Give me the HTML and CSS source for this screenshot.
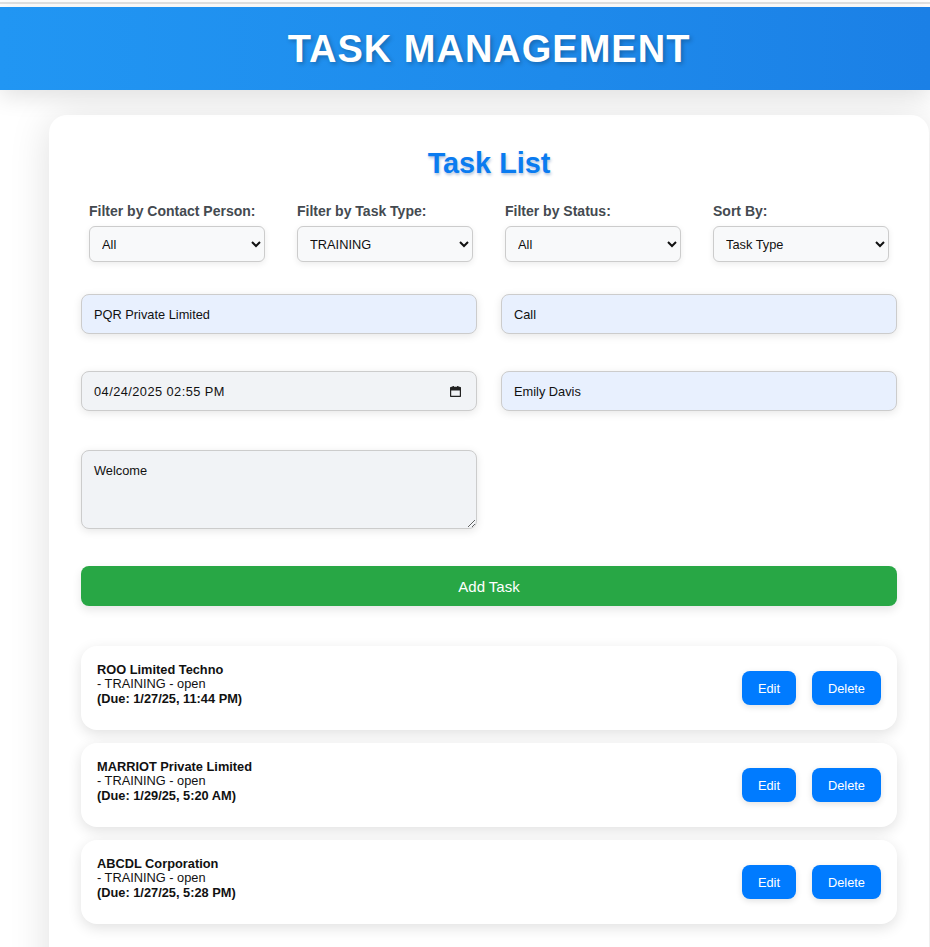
FILE: index.html
```html
<!DOCTYPE html>
<html lang="en">
<head>
<meta charset="utf-8">
<title>Task Management</title>
<link rel="stylesheet" href="styles.css">
</head>
<body>
<div class="topstrip"></div>
<header class="app-header">
  <h1 class="app-title">TASK MANAGEMENT</h1>
</header>
<main class="page">
  <section class="card">
    <h2 class="card-title">Task List</h2>
    <div class="filters">
      <div class="filter">
        <label class="filter-label">Filter by Contact Person:</label>
        <select class="filter-select"><option>All</option></select>
      </div>
      <div class="filter">
        <label class="filter-label">Filter by Task Type:</label>
        <select class="filter-select"><option>TRAINING</option></select>
      </div>
      <div class="filter">
        <label class="filter-label">Filter by Status:</label>
        <select class="filter-select"><option>All</option></select>
      </div>
      <div class="filter">
        <label class="filter-label">Sort By:</label>
        <select class="filter-select"><option>Task Type</option></select>
      </div>
    </div>
    <form class="task-form">
      <input class="field field-blue" type="text" value="PQR Private Limited">
      <input class="field field-blue" type="text" value="Call">
      <div class="date-wrap">
        <input class="field field-grey field-date" type="text" value="04/24/2025 02:55 PM">
        <svg class="cal-icon" width="11" height="11" viewBox="0 0 11 11" aria-hidden="true">
          <rect x="0.5" y="1.5" width="10" height="9" rx="1" fill="none" stroke="#222" stroke-width="1.4"/>
          <rect x="0.5" y="1.5" width="10" height="3" fill="#222"/>
          <rect x="2.5" y="0" width="1.4" height="2.5" fill="#222"/>
          <rect x="7.1" y="0" width="1.4" height="2.5" fill="#222"/>
        </svg>
      </div>
      <input class="field field-blue" type="text" value="Emily Davis">
      <textarea class="field field-grey field-area">Welcome</textarea>
    </form>
    <button class="add-btn" type="button">Add Task</button>
    <ul class="task-list">
      <li class="task-item">
        <div class="task-text">
          <strong>ROO Limited Techno</strong><br>
          - TRAINING - open<br>
          <strong>(Due: 1/27/25, 11:44 PM)</strong>
        </div>
        <div class="task-actions">
          <button class="act-btn" type="button">Edit</button>
          <button class="act-btn" type="button">Delete</button>
        </div>
      </li>
      <li class="task-item">
        <div class="task-text">
          <strong>MARRIOT Private Limited</strong><br>
          - TRAINING - open<br>
          <strong>(Due: 1/29/25, 5:20 AM)</strong>
        </div>
        <div class="task-actions">
          <button class="act-btn" type="button">Edit</button>
          <button class="act-btn" type="button">Delete</button>
        </div>
      </li>
      <li class="task-item">
        <div class="task-text">
          <strong>ABCDL Corporation</strong><br>
          - TRAINING - open<br>
          <strong>(Due: 1/27/25, 5:28 PM)</strong>
        </div>
        <div class="task-actions">
          <button class="act-btn" type="button">Edit</button>
          <button class="act-btn" type="button">Delete</button>
        </div>
      </li>
    </ul>
  </section>
</main>
</body>
</html>
```

FILE: styles.css
```css
* { box-sizing: border-box; }

html, body {
  margin: 0;
  padding: 0;
  background: #ffffff;
  font-family: "Liberation Sans", Arial, sans-serif;
  color: #111;
}

body { overflow: hidden; height: 947px; }

.topstrip {
  height: 2px;
  margin: 2px 0 3px;
  background: #e2e2e2;
}

.app-header {
  height: 83px;
  padding-left: 48px;
  background: linear-gradient(90deg, #2196f3 0%, #1e8aeb 60%, #1b80e6 100%);
  box-shadow: 0 6px 22px rgba(0, 0, 0, 0.12);
  position: relative;
  z-index: 2;
}

.app-title {
  margin: 0;
  padding-top: 2px;
  text-align: center;
  color: #ffffff;
  font-family: "Liberation Sans", Arial, sans-serif;
  font-size: 38px;
  line-height: 81px;
  font-weight: 700;
  letter-spacing: 1px;
  text-shadow: 2px 2px 4px rgba(0, 0, 0, 0.25);
}

.page {
  padding: 25px 0 0 49px;
}

.card {
  width: 880px;
  min-height: 900px;
  background: #ffffff;
  border-radius: 18px;
  padding: 28px 32px 32px;
  box-shadow: 0 4px 40px rgba(0, 0, 0, 0.13);
}

.card-title {
  margin: 0;
  text-align: center;
  color: #0a7bf0;
  font-size: 28.8px;
  line-height: 40px;
  font-weight: 700;
  text-shadow: 1px 2px 3px rgba(0, 60, 140, 0.3);
}

.filters {
  display: flex;
  gap: 32px;
  padding: 0 8px;
  margin-top: 20px;
}

.filter {
  display: flex;
  flex-direction: column;
  width: 176px;
}

.filter-label {
  font-size: 14px;
  font-weight: 700;
  color: #444a50;
  line-height: 16px;
  margin-bottom: 7px;
}

.filter-select {
  height: 36px;
  width: 176px;
  padding: 0 8px;
  font-family: "Liberation Sans", Arial, sans-serif;
  font-size: 12.8px;
  color: #111;
  background-color: #f8f9fa;
  border: 1px solid #cccccc;
  border-radius: 6px;
  box-shadow: 0 2px 6px rgba(0, 0, 0, 0.08);
}

.task-form {
  display: grid;
  grid-template-columns: 396px 396px;
  column-gap: 24px;
  row-gap: 37px;
  margin-top: 32px;
}

.field {
  display: block;
  width: 396px;
  height: 40px;
  margin: 0;
  padding: 0 12px;
  font-family: "Liberation Sans", Arial, sans-serif;
  font-size: 12.8px;
  color: #111;
  border: 1px solid #cccccc;
  border-radius: 8px;
  box-shadow: 0 2px 8px rgba(0, 0, 0, 0.1);
}

.field-blue { background: #e8f0fe; }
.field-grey { background: #f1f3f6; }

.field-date { letter-spacing: 0.45px; }

.date-wrap {
  position: relative;
  width: 396px;
}

.cal-icon {
  position: absolute;
  right: 16px;
  top: 15px;
}

.field-area {
  height: 79px;
  margin-top: 2px;
  padding: 12px;
  resize: vertical;
}

.add-btn {
  display: block;
  width: 816px;
  height: 40px;
  margin-top: 37px;
  border: none;
  border-radius: 8px;
  background: #28a745;
  color: #ffffff;
  font-family: "Liberation Sans", Arial, sans-serif;
  font-size: 15px;
  box-shadow: 0 4px 10px rgba(0, 0, 0, 0.1);
}

.task-list {
  list-style: none;
  margin: 40px 0 0;
  padding: 0;
  display: flex;
  flex-direction: column;
  gap: 13px;
}

.task-item {
  height: 84px;
  display: flex;
  align-items: center;
  justify-content: space-between;
  padding: 0 16px;
  background: #ffffff;
  border-radius: 16px;
  box-shadow: 0 4px 14px rgba(0, 0, 0, 0.12);
}

.task-text {
  font-size: 12.8px;
  line-height: 14.6px;
  color: #111;
  padding-bottom: 7px;
}

.task-actions {
  display: flex;
  gap: 16px;
}

.act-btn {
  height: 34px;
  padding: 0 16px;
  border: none;
  border-radius: 8px;
  background: #007bff;
  color: #ffffff;
  font-family: "Liberation Sans", Arial, sans-serif;
  font-size: 12.8px;
  box-shadow: 0 2px 6px rgba(0, 0, 0, 0.12);
}
```
